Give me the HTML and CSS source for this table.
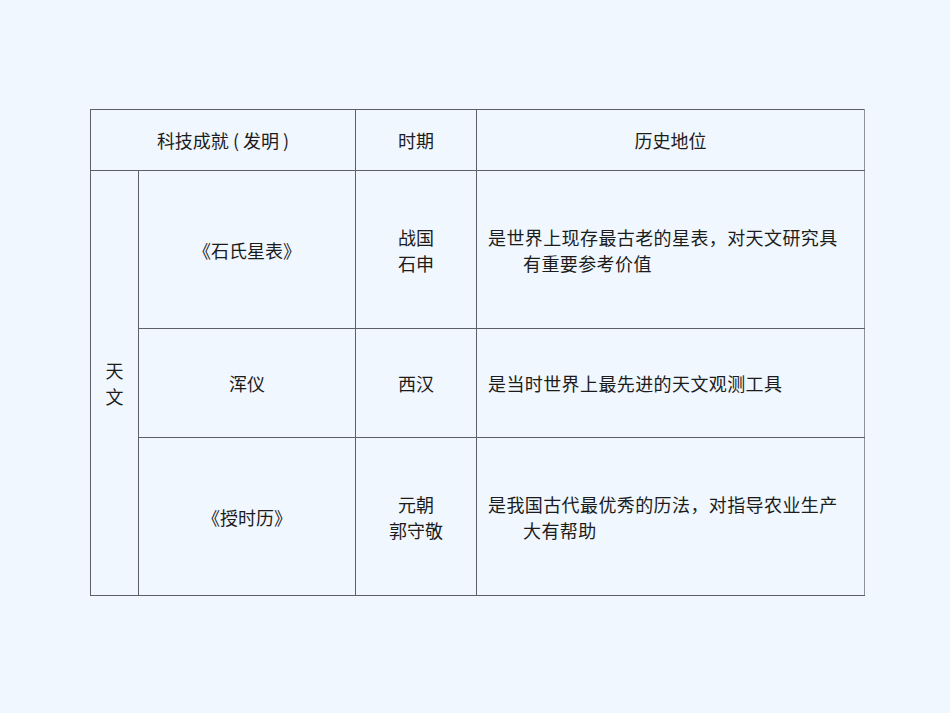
FILE: index.html
```html
<!DOCTYPE html>
<html lang="zh">
<head>
<meta charset="utf-8">
<link rel="stylesheet" href="styles.css">
</head>
<body>
<div class="page">
  <table class="grid">
    <colgroup>
      <col class="c1">
      <col class="c2">
      <col class="c3">
      <col class="c4">
    </colgroup>
    <tr class="head">
      <td colspan="2" class="center">科技成就 ( 发明 )</td>
      <td class="center">时期</td>
      <td class="center hist">历史地位</td>
    </tr>
    <tr class="tall">
      <td rowspan="3" class="center cat">天<br>文</td>
      <td class="center">《石氏星表》</td>
      <td class="center">战国<br>石申</td>
      <td class="hist desc">是世界上现存最古老的星表，对天文研究具<br><span class="indent">有重要参考价值</span></td>
    </tr>
    <tr class="mid">
      <td class="center">浑仪</td>
      <td class="center">西汉</td>
      <td class="hist desc">是当时世界上最先进的天文观测工具</td>
    </tr>
    <tr class="tall">
      <td class="center">《授时历》</td>
      <td class="center">元朝<br>郭守敬</td>
      <td class="hist desc">是我国古代最优秀的历法，对指导农业生产<br><span class="indent">大有帮助</span></td>
    </tr>
  </table>
</div>
</body>
</html>
```
FILE: styles.css
```css
html, body {
  margin: 0;
  padding: 0;
  background: #f0f7fe;
}
body {
  font-family: "Noto Sans CJK SC", sans-serif;
  color: #1c1c1c;
  font-size: 18px;
}
.page {
  width: 950px;
  height: 713px;
  padding: 109px 0 0 90px;
  box-sizing: border-box;
}
.grid {
  border-collapse: collapse;
  table-layout: fixed;
  width: 774px;
}
.c1 { width: 48px; }
.c2 { width: 217px; }
.c3 { width: 121px; }
.c4 { width: 388px; }
.grid td {
  border: 1px solid #5b606c;
  padding: 0;
  line-height: 26px;
  vertical-align: middle;
}
.grid td.hist {
  border-left-color: #8d929c;
  border-right-color: #8d929c;
}
.head { height: 61px; }
.tall { height: 158px; }
.mid { height: 109px; }
.center { text-align: center; }
.cat { line-height: 27px; }
.desc {
  text-align: left;
  padding-left: 11px !important;
  white-space: nowrap;
  letter-spacing: 0.4px;
}
.indent {
  padding-left: 35px;
}
```
